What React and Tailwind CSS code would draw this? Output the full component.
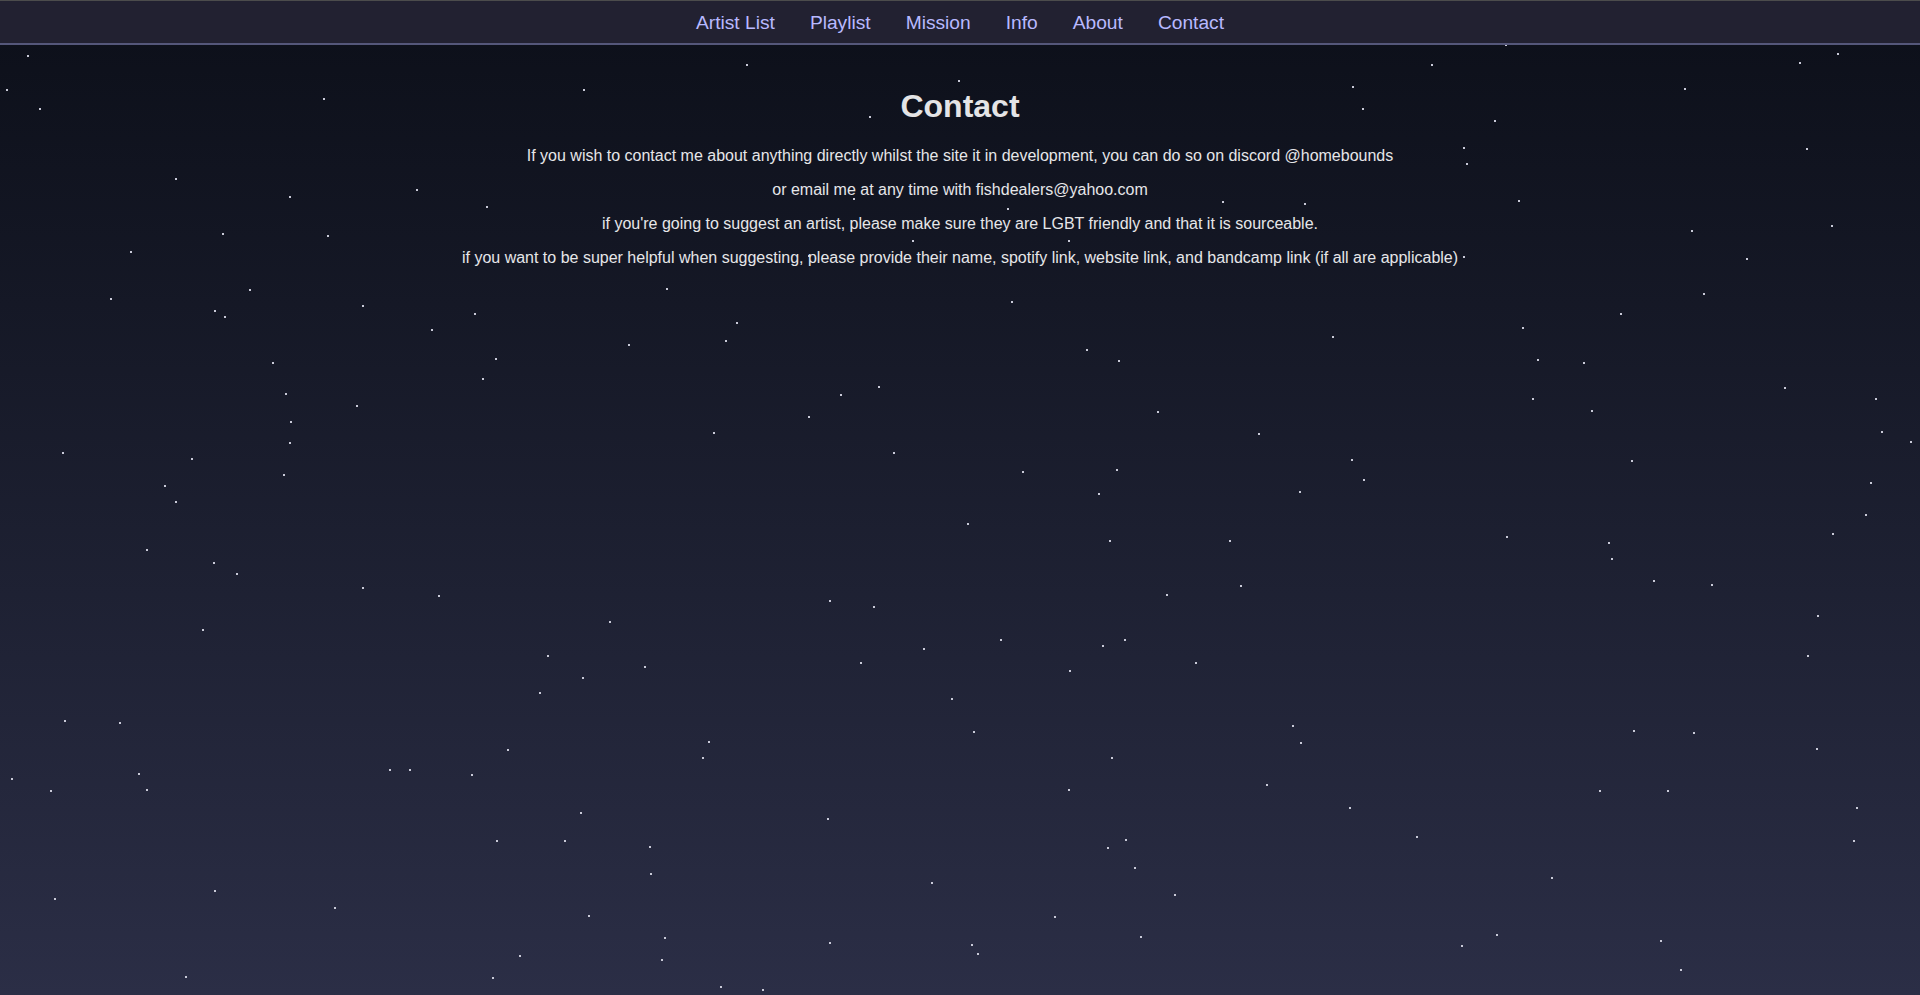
const STARS = [
  [22,45],[5,73],[32,88],[264,80],[476,73],[609,52],[710,95],[782,65],[1104,70],[1112,88],[1169,52],[1229,36],[1375,72],[1469,51],[1500,43],[1220,98],[1475,121],[1195,120],[1197,133],[143,145],[236,160],[340,154],[397,168],[181,190],[267,192],[106,205],[697,162],[822,170],[998,164],[1065,166],[1240,163],[1381,188],[1495,184],[872,196],[745,196],[1426,211],[1195,209],[660,208],[203,236],[90,243],[175,253],[183,258],[296,249],[387,256],[544,235],[826,246],[352,269],[601,263],[1243,267],[1323,256],[1391,239],[513,281],[592,278],[1088,274],[887,285],[404,292],[222,296],[913,294],[1255,293],[1293,296],[394,309],[233,321],[291,331],[717,315],[686,322],[1251,325],[1299,335],[1457,316],[1531,325],[237,344],[660,340],[945,336],[1536,352],[236,361],[582,353],[1027,354],[1560,360],[51,369],[156,374],[729,369],[1103,375],[1332,376],[231,387],[835,385],[911,383],[1113,391],[134,396],[143,409],[897,403],[1061,401],[1527,394],[1523,420],[790,427],[1496,435],[906,441],[1004,441],[1230,438],[1313,443],[119,448],[1316,456],[174,459],[193,468],[1350,474],[1397,477],[296,479],[1013,478],[358,486],[952,485],[677,490],[713,495],[1484,502],[497,507],[165,514],[817,522],[900,527],[918,522],[1476,535],[447,535],[702,541],[754,529],[976,541],[526,544],[873,547],[475,553],[440,565],[777,570],[52,588],[97,590],[1055,592],[1062,606],[1334,596],[1383,598],[795,597],[578,605],[573,618],[414,612],[907,618],[1483,611],[9,635],[113,631],[318,628],[334,628],[385,632],[41,645],[119,644],[872,644],[1034,640],[1306,645],[1361,645],[1516,659],[474,663],[675,668],[1102,659],[405,686],[461,686],[530,691],[919,685],[904,692],[1156,683],[1513,686],[926,708],[531,713],[1267,716],[760,720],[175,727],[44,733],[959,730],[273,741],[480,747],[861,748],[1222,763],[1193,772],[542,765],[931,764],[677,769],[793,771],[798,778],[1356,768],[540,783],[424,780],[151,797],[402,798],[588,805],[622,808],[1372,791],
];

const SCALE = 1920 / 1568;

const links = ['Artist List', 'Playlist', 'Mission', 'Info', 'About', 'Contact'];

export default function App() {
  return (
    <div className="relative min-h-screen h-[995px] overflow-hidden bg-gradient-to-b from-[#0c0f19] to-[#2b2e46] font-['Liberation_Sans',Arial,sans-serif]">
      {/* star field */}
      <div className="absolute inset-0 pointer-events-none">
        {STARS.map(([x, y], i) => (
          <div
            key={i}
            className="absolute w-[2px] h-[2px] bg-[#c9cad8]"
            style={{ left: Math.round(x * SCALE), top: Math.round(y * SCALE) }}
          />
        ))}
      </div>

      <nav className="relative border-t border-[#4c4c4c] border-b-2 border-b-[#55577a] bg-[#222131]">
        <div className="h-[42px] pt-[1px] flex items-center justify-center gap-[35px]">
          {links.map(l => (
            <a key={l} href="#" className="text-[19.2px] leading-[normal] text-[#b8b9ff]">{l}</a>
          ))}
        </div>
      </nav>

      <main className="relative pt-[22px] text-center">
        <h1 className="text-[32px] leading-[normal] font-bold text-[#e4e4e6] mt-[21px] mb-[22px]">Contact</h1>
        <p className="text-base leading-[normal] text-[#e6e6e9] my-4">If you wish to contact me about anything directly whilst the site it in development, you can do so on discord @homebounds</p>
        <p className="text-base leading-[normal] text-[#e6e6e9] my-4">or email me at any time with fishdealers@yahoo.com</p>
        <p className="text-base leading-[normal] text-[#e6e6e9] my-4">if you're going to suggest an artist, please make sure they are LGBT friendly and that it is sourceable.</p>
        <p className="text-base leading-[normal] text-[#e6e6e9] my-4">if you want to be super helpful when suggesting, please provide their name, spotify link, website link, and bandcamp link (if all are applicable)</p>
      </main>
    </div>
  );
}
